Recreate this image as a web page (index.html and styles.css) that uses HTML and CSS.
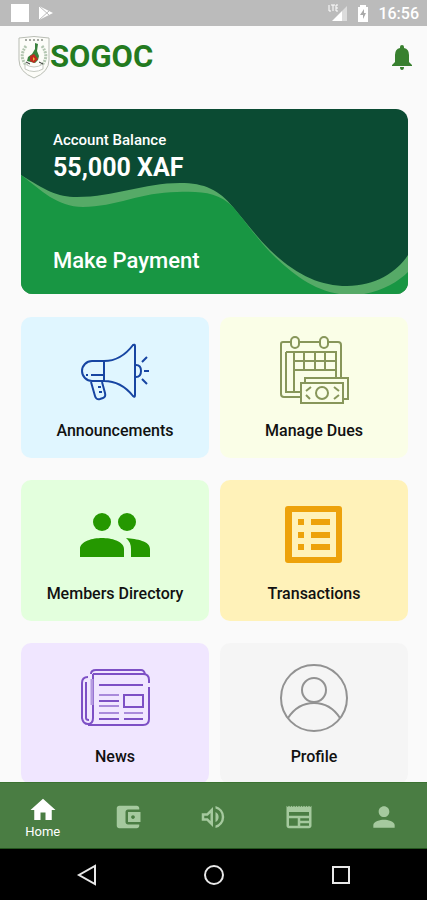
FILE: index.html
```html
<!DOCTYPE html>
<html lang="en">
<head>
<meta charset="utf-8">
<meta name="viewport" content="width=device-width, initial-scale=1">
<title>SOGOC</title>
<link rel="stylesheet" href="styles.css">
</head>
<body>
<div class="status">
  <div class="status-group">
    <svg width="18" height="18" viewBox="0 0 18 18"><path fill="#fff" d="M0 0h18v18H0z"/></svg>
    <svg width="16" height="16" viewBox="0 0 16 16"><path fill="#fff" d="M1 1l14 7-14 7z"/><path d="M1 1l10 9M1 15l10-9" stroke="#bbb" fill="none"/></svg>
  </div>
  <div class="status-group">
    <svg width="20" height="18" viewBox="0 0 20 18"><path fill="#fff" d="M4 17L14 7v10z"/><path fill="#dcdcdc" d="M14 7l5-5v15h-5z"/><path d="M1 1v6h2M3 1h4M5 1v6M10 1H8v6h2M8 4h2" stroke="#fff" fill="none"/></svg>
    <svg width="12" height="17" viewBox="0 0 12 17"><path fill="#fff" d="M3 2V0h6v2h2v15H1V2z"/><path fill="#aaa" d="M7 4L3 10h3v4l3-6H7z"/></svg>
    <span class="clock">16:56</span>
  </div>
</div>

<header class="header">
  <div class="brand">
    <svg class="crest" width="32" height="43" viewBox="0 0 32 43">
      <path d="M1 2q15-3 30 0v22q0 12-15 18Q1 36 1 24z" fill="#fcfcf8" stroke="#b9bdb4"/>
      <path d="M7 4h2M11 4h2M15 4h2M19 4h2M23 4h2" stroke="#a5a9a2" stroke-width="2"/>
      <path d="M8 10q-8 11 1 20M24 10q8 11-1 20" fill="none" stroke="#b3c6b1" stroke-width="3" stroke-dasharray="2 1"/>
      <path d="M7 28q9 6 18 0v5q-9 5-18 0z" fill="#fff" stroke="#c5c9c0"/>
      <path d="M17 7l3 1-1 7 2 5-1 4-3 3-8-2 1-4 4-3 3-5z" fill="#39813d"/>
      <path d="M12 20l4-2 4 5-4 4-4-2z" fill="#c12a20"/><path d="M15 21l2 2-2 2z" fill="#e8c43a"/>
      <path d="M8 26l4 2M21 26l4 2" stroke="#333"/>
    </svg>
    <h1 class="brand-name">SOGOC</h1>
  </div>
  <button class="bell" type="button" aria-label="Notifications">
    <svg width="20" height="25" viewBox="0 0 20 25"><path fill="#38802f" d="M8 3V2q0-2 2-2t2 2v1q5 1 5 7v7l3 3v1H0v-1l3-3v-7q0-6 5-7zM8 22h4q0 3-2 3t-2-3z"/></svg>
  </button>
</header>

<main class="main">
  <section class="balance">
    <svg class="wave" viewBox="0 0 387 185" preserveAspectRatio="none" aria-hidden="true">
      <path fill="#56aa67" d="M0 66C24 81 36 88 56 88C93 88 123 74 159 74C184 74 198 81 212 98C224 112 234 126 249 141C275 166 299 177 326 177C354 177 376 163 387 146V185H0z"/>
      <path fill="#189643" d="M0 66C20 81 36 98 62 98C94 98 121 83 156 83C180 82 197 83 212 98C224 112 234 127 249 143C273 167 298 186 331 186C355 186 376 174 387 163V185H0z"/>
    </svg>
    <div>
      <p class="balance-label">Account Balance</p>
      <p class="balance-amount">55,000 XAF</p>
    </div>
    <a class="pay" href="#pay">Make Payment</a>
  </section>

  <div class="tiles">
    <a class="tile sky" href="#announcements">
      <svg width="72" height="72" viewBox="0 0 72 72" fill="none" stroke="#1745a2" stroke-width="2">
        <path d="M25 26H13a10 10 0 0 0 0 20H25zM25 26q17 0 29-16 2-1 2 1v49q0 3-2 1Q42 46 25 46M57 30q5 0 5 6t-5 6M12 47l4 14q1 4 5 3l3-1q3-1 2-5l-3-11M7 40h2M12 40h12M19 52h3M20 57h3M63 27l5-5M65 36h5M63 44l5 5"/>
      </svg>
      <span>Announcements</span>
    </a>
    <a class="tile lime" href="#dues">
      <svg width="72" height="72" viewBox="0 0 72 72" fill="none" stroke="#87965a" stroke-width="2">
        <path d="M13 7H5q-2 0-2 2v50q0 3 3 3h16M21 7h21M50 7h10q3 0 3 3v33M8 17h50v26M8 17v40h15M16 17v40M16 26h42M16 35h42M26 17v18M37 17v18M47 17v18"/>
        <rect x="13" y="2" width="8" height="11" rx="4"/><rect x="42" y="2" width="8" height="11" rx="4"/>
        <path class="note" d="M27 48v-5h43v21h-5V48z"/><rect class="note" x="23" y="48" width="42" height="20"/><circle cx="44" cy="58" r="6"/>
        <path d="M33 52l-5 4M28 60l4 4M56 52l5 4M61 60l-5 4"/>
      </svg>
      <span>Manage Dues</span>
    </a>
    <a class="tile mint" href="#members">
      <svg width="72" height="72" viewBox="0 0 72 72" fill="#259800">
        <circle cx="23" cy="24" r="9"/><circle cx="48" cy="24" r="9"/>
        <path d="M1 59V51C1 43 14 40 23 40s22 3 22 11v8zM47 40c11 1 24 3 24 11v8H52v-8q0-7-5-11z"/>
      </svg>
      <span>Members Directory</span>
    </a>
    <a class="tile amber" href="#transactions">
      <svg width="72" height="72" viewBox="0 0 72 72" fill="#eda20b">
        <path fill-rule="evenodd" d="M10 8h51q3 0 3 3v51q0 3-3 3H10q-3 0-3-3V11q0-3 3-3zM14 14v45h44V14z"/>
        <path d="M20 21h6v6h-6zM33 21h19v6H33zM20 34h6v6h-6zM33 34h19v6H33zM20 46h6v6h-6zM33 46h19v6H33z"/>
      </svg>
      <span>Transactions</span>
    </a>
    <a class="tile violet" href="#news">
      <svg width="72" height="72" viewBox="0 0 72 72" fill="none" stroke="#7d50c5" stroke-width="2">
        <path d="M14 13h50q6 0 6 6v3M70 26v32q0 6-6 6H9M14 13v44q0 6-5 6t-6-6V22q0-6 6-6M12 13q0-4 5-4h45q3 0 4 4M7 21v36q0 2 3 2"/>
        <path d="M13 18v26" stroke="#b59ae0" stroke-width="3"/>
        <path d="M20 24h44"/><path d="M20 34h20M20 45h20M20 52h20M45 52h19" stroke="#a98adb"/><path d="M20 40h20M20 58h20M45 58h19M45 34h19v12H45z"/>
      </svg>
      <span>News</span>
    </a>
    <a class="tile smoke" href="#profile">
      <svg width="72" height="72" viewBox="0 0 72 72" fill="none" stroke="#929292" stroke-width="2">
        <circle cx="36" cy="37" r="33"/><circle cx="36" cy="29" r="12"/><path d="M10 57c13-20 39-20 52 0"/>
      </svg>
      <span>Profile</span>
    </a>
  </div>
</main>

<nav class="tabs" aria-label="Main">
  <a class="tab active" href="#home"><svg width="30" height="30" viewBox="0 0 24 24"><path d="M10 20v-6h4v6h5v-8h3L12 3 2 12h3v8z"/></svg><span>Home</span></a>
  <a class="tab" href="#wallet" aria-label="Wallet"><svg width="30" height="30" viewBox="0 0 24 24"><path d="M21 18v1c0 1.100-.9 2-2 2H5c-1.110 0-2-.9-2-2V5c0-1.100.89-2 2-2h14c1.100 0 2 .9 2 2v1h-9c-1.110 0-2 .9-2 2v8c0 1.100.89 2 2 2h9zm-9-2h10V8H12v8zm4-2.500c-.83 0-1.500-.67-1.500-1.500s.67-1.500 1.500-1.500 1.500.67 1.500 1.500-.67 1.500-1.500 1.500z"/></svg></a>
  <a class="tab" href="#sound" aria-label="Announcements"><svg width="30" height="30" viewBox="0 0 24 24"><path d="M3 9v6h4l5 5V4L7 9H3zm7-.17v6.340L7.830 13H5v-2h2.830L10 8.830zM16.500 12A4.500 4.500 0 0 0 14 7.970v8.050A4.470 4.470 0 0 0 16.500 12zM14 3.230v2.060a7 7 0 0 1 0 13.420v2.060a9 9 0 0 0 0-17.540z"/></svg></a>
  <a class="tab" href="#feed" aria-label="News"><svg width="30" height="30" viewBox="0 0 24 24"><path fill-rule="evenodd" d="M22 3l-1 1-1-1-1 1-1-1-1 1-1-1-1 1-1-1-1 1-1-1-1 1-1-1-1 1-1-1-1 1-1-1-1 1-1-1-1 1-1-1v16c0 1.100.9 2 2 2h16c1.100 0 2-.9 2-2V3zM11 19H4v-6h7v6zm9 0h-7v-2h7v2zm0-4h-7v-2h7v2zm0-4H4V8h16v3z"/></svg></a>
  <a class="tab" href="#account" aria-label="Profile"><svg width="32" height="32" viewBox="0 0 24 24"><path d="M12 12c2.210 0 4-1.790 4-4s-1.790-4-4-4-4 1.790-4 4 1.790 4 4 4zm0 2c-2.670 0-8 1.340-8 4v2h16v-2c0-2.660-5.330-4-8-4z"/></svg></a>
</nav>

<div class="system">
  <button type="button" aria-label="Back"><svg width="24" height="24" viewBox="0 0 24 24"><path d="M20 3v18L4 12z"/></svg></button>
  <button type="button" aria-label="Home"><svg width="24" height="24" viewBox="0 0 24 24"><circle cx="12" cy="12" r="9"/></svg></button>
  <button type="button" aria-label="Recent apps"><svg width="24" height="24" viewBox="0 0 24 24"><path d="M4 4h16v16H4z"/></svg></button>
</div>
</body>
</html>
```
FILE: styles.css
```css
* { box-sizing: border-box; }
body {
  margin: 0;
  height: 100vh;
  display: flex;
  flex-direction: column;
  background: #fafafa;
  font-family: Roboto, "Liberation Sans", sans-serif;
  color: #111;
}
h1, p { margin: 0; }
a { color: inherit; text-decoration: none; }
button { border: 0; padding: 0; background: none; display: flex; }
svg { display: block; flex: none; }

.status {
  flex: none;
  height: 26px;
  padding: 0 8px 0 11px;
  display: flex;
  justify-content: space-between;
  align-items: center;
  background: #bbb;
  color: #fff;
}
.status-group { display: flex; align-items: center; gap: 9px; }
.clock { font-size: 16px; line-height: 24px; font-weight: 500; padding-top: 2px; }

.header {
  flex: none;
  height: 64px;
  padding: 0 15px 2px 18px;
  display: flex;
  justify-content: space-between;
  align-items: center;
}
.brand { display: flex; align-items: center; }
.brand-name { font-size: 31px; line-height: 36px; font-weight: 700; color: #237a1f; }

.main {
  flex: 1;
  min-height: 0;
  overflow: hidden;
  padding: 19px 19px 0 21px;
}
.balance {
  position: relative;
  height: 185px;
  padding: 20px 32px;
  display: flex;
  flex-direction: column;
  justify-content: space-between;
  align-items: flex-start;
  border-radius: 12px;
  overflow: hidden;
  background: #0b4b33;
  color: #fff;
}
.wave { position: absolute; inset: 0; width: 100%; height: 100%; }
.balance > :not(.wave) { position: relative; }
.balance-label { font-size: 15px; line-height: 22px; font-weight: 500; }
.balance-amount { font-size: 25px; line-height: 34px; font-weight: 700; }
.pay { font-size: 22px; line-height: 26px; font-weight: 500; }

.tiles {
  margin-top: 23px;
  display: grid;
  grid-template-columns: 1fr 1fr;
  gap: 22px 11px;
}
.tile {
  height: 141px;
  padding-top: 18px;
  display: flex;
  flex-direction: column;
  align-items: center;
  gap: 12px;
  border-radius: 10px;
  font-size: 16px;
  line-height: 24px;
  font-weight: 500;
}
.sky { background: #e0f6ff; }
.lime { background: #fafee7; }
.note { fill: #fafee7; }
.mint { background: #e3ffdd; }
.amber { background: #fff2b9; }
.violet { background: #f0e6ff; }
.smoke { background: #f5f5f5; }

.tabs {
  flex: none;
  height: 67px;
  display: grid;
  grid-template-columns: repeat(5, 1fr);
  border-top: 1px solid #3b7232;
  border-bottom: 1px solid #24551e;
  background: #4a7d43;
}
.tab {
  padding-top: 2px;
  display: flex;
  flex-direction: column;
  align-items: center;
  justify-content: center;
  font-size: 13px;
  line-height: 14px;
  color: #fff;
}
.tab svg { fill: #a5c99e; }
.tab.active svg { fill: #fff; }

.system {
  flex: none;
  height: 51px;
  padding: 0 23px;
  display: grid;
  grid-template-columns: repeat(3, 1fr);
  place-items: center;
  background: #000;
}
.system svg { fill: none; stroke: #e8e8e8; stroke-width: 2; }
```
